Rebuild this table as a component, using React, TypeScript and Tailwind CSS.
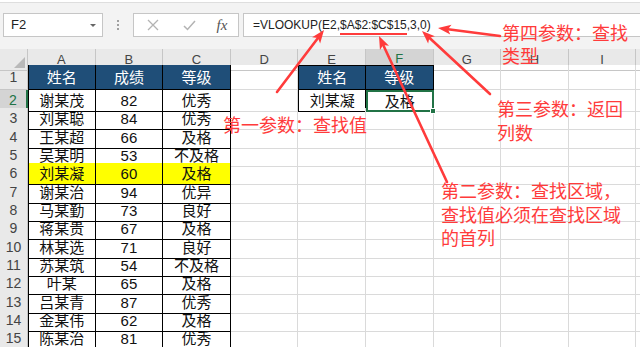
import React from 'react';

const COLS = ['A', 'B', 'C', 'D', 'E', 'F', 'G', 'H', 'I', 'J'];

const rows: [string, string, string][] = [
  ['谢某茂', '82', '优秀'],
  ['刘某聪', '84', '优秀'],
  ['王某超', '66', '及格'],
  ['吴某明', '53', '不及格'],
  ['刘某凝', '60', '及格'],
  ['谢某治', '94', '优异'],
  ['马某勤', '73', '良好'],
  ['蒋某贵', '67', '及格'],
  ['林某选', '71', '良好'],
  ['苏某筑', '54', '不及格'],
  ['叶某', '65', '及格'],
  ['吕某青', '87', '优秀'],
  ['金某伟', '62', '及格'],
  ['陈某治', '81', '优秀'],
];

const font = "font-['Liberation_Sans','Noto_Sans_CJK_SC',sans-serif]";
const cjk = "font-['Noto_Sans_CJK_SC',sans-serif]";

function Arrow({ x1, y1, x2, y2 }: { x1: number; y1: number; x2: number; y2: number }) {
  const dx = x2 - x1;
  const dy = y2 - y1;
  const len = Math.hypot(dx, dy);
  const ux = dx / len;
  const uy = dy / len;
  const hl = 13;
  const hw = 5;
  const bx = x2 - ux * hl;
  const by = y2 - uy * hl;
  const pts = `${x2},${y2} ${bx - uy * hw},${by + ux * hw} ${bx + ux * 3},${by + uy * 3} ${bx + uy * hw},${by - ux * hw}`;
  return (
    <g>
      <line x1={x1} y1={y1} x2={bx + ux * 3} y2={by + uy * 3} stroke="#ff3b3b" strokeWidth={2.6} strokeLinecap="round" />
      <polygon points={pts} fill="#ff3b3b" />
    </g>
  );
}

function Toolbar() {
  return (
    <div className="h-[47px] bg-[#f3f3f3] border-t border-[#dedede] mt-[2px] flex items-start pt-[10px] pl-[3px]">
      <div className="w-[100px] h-[24px] bg-white border border-[#c6c6c6] flex items-center justify-between pl-[7px] pr-[6px]">
        <span className={`${font} text-[13px] text-[#222]`}>F2</span>
        <span className="w-0 h-0 border-x-[3px] border-x-transparent border-t-[3px] border-t-[#666]" />
      </div>
      <div className="w-[30px] h-[24px] flex flex-col items-center justify-center gap-[2px]">
        <span className="w-[2px] h-[2px] bg-[#a0a0a0]" />
        <span className="w-[2px] h-[2px] bg-[#a0a0a0]" />
        <span className="w-[2px] h-[2px] bg-[#a0a0a0]" />
      </div>
      <div className="w-[106px] h-[24px] bg-white border border-[#c6c6c6] flex items-center">
        <div className="w-[38px] flex justify-center">
          <svg width="12" height="12" viewBox="0 0 12 12">
            <path d="M1 1L11 11M11 1L1 11" stroke="#b3b3b3" strokeWidth="1.3" />
          </svg>
        </div>
        <div className="w-[34px] flex justify-center">
          <svg width="13" height="11" viewBox="0 0 13 11">
            <path d="M1 6L4.5 9.5L12 1" stroke="#b3b3b3" strokeWidth="1.5" fill="none" />
          </svg>
        </div>
        <div className="w-[32px] flex justify-center">
          <span className="font-['Liberation_Serif',serif] italic text-[15px] text-[#555]">fx</span>
        </div>
      </div>
      <div className="ml-[4px] flex-1 h-[24px] bg-white border border-[#c6c6c6] border-r-0 flex items-center pl-[9px]">
        <span className={`${font} text-[12px] text-[#222]`}>
          =VLOOKUP(E2,
          <span className="relative">
            $A$2:$C$15
            <span className="absolute left-0 right-0 bottom-[-3px] h-[2px] bg-[#ff3b3b]" />
          </span>
          ,3,0)
        </span>
      </div>
    </div>
  );
}

function Blank() {
  return <div className="border-r border-b border-[#dadada]" />;
}

function Sheet() {
  const gridCols = 'grid grid-cols-[28px_repeat(10,67.6px)]';
  const head = 'bg-[#e9e9e9] border-r border-b border-[#c6c6c6] text-[#444]';
  const table = 'border-r border-b border-black';
  return (
    <div className="flex flex-col">
      <div className={`${gridCols} h-[16px] bg-[#e9e9e9]`}>
        <div className="relative border-r border-b border-[#c6c6c6]">
          <span className="absolute right-[2px] bottom-[2px] w-0 h-0 border-l-[11px] border-l-transparent border-b-[11px] border-b-[#b9b9b9]" />
        </div>
        {COLS.map((c) =>
          c === 'F' ? (
            <div key={c} className={`${font} bg-[#d4d4d4] border-r border-[#c6c6c6] border-b-2 border-b-[#217346] text-[13px] text-[#217346] flex items-center justify-center`}>
              {c}
            </div>
          ) : (
            <div key={c} className={`${font} border-r border-b border-[#c6c6c6] text-[13px] text-[#444] flex items-center justify-center`}>
              {c}
            </div>
          ),
        )}
      </div>

      <div className={`${gridCols} h-[25px]`}>
        <div className={`${font} ${head} text-[14px] flex items-end justify-center pb-[1px]`}>1</div>
        {['姓名', '成绩', '等级'].map((t, i) => (
          <div key={t} className={`${cjk} ${table} ${i === 0 ? 'border-l' : ''} bg-[#1f4e78] text-white text-[15px] flex items-center justify-center`}>
            {t}
          </div>
        ))}
        <Blank />
        <div className={`${cjk} border border-black bg-[#1f4e78] text-white text-[15px] flex items-center justify-center`}>姓名</div>
        <div className={`${cjk} border-y border-r border-black bg-[#1f4e78] text-white text-[15px] flex items-center justify-center`}>等级</div>
        <Blank />
        <Blank />
        <Blank />
        <Blank />
      </div>

      {rows.map((r, idx) => {
        const n = idx + 2;
        return (
          <div key={n} className={`${gridCols} h-[18.33px]`}>
            {n === 2 ? (
              <div className={`${font} bg-[#d4d4d4] border-b border-[#c6c6c6] border-r-2 border-r-[#217346] text-[14px] text-[#217346] flex items-center justify-center`}>{n}</div>
            ) : (
              <div className={`${font} ${head} text-[14px] flex items-center justify-center`}>{n}</div>
            )}
            {r.map((t, i) => (
              <div key={i} className={`${font} ${table} ${i === 0 ? 'border-l' : ''} ${n === 6 ? 'bg-[#ffff00]' : ''} text-[15px] text-[#111] leading-none flex items-center justify-center`}>
                {t}
              </div>
            ))}
            <Blank />
            {n === 2 ? (
              <>
                <div className={`${font} border-x border-b border-black text-[15px] text-[#111] leading-none flex items-center justify-center`}>刘某凝</div>
                <div className={`${font} relative border-2 border-[#217346] text-[15px] text-[#111] leading-none flex items-center justify-center`}>
                  及格
                  <span className="absolute right-[-4px] bottom-[-4px] w-[6px] h-[6px] bg-[#217346] border border-white" />
                </div>
              </>
            ) : (
              <>
                <Blank />
                <Blank />
              </>
            )}
            <Blank />
            <Blank />
            <Blank />
            <Blank />
          </div>
        );
      })}

      <div className={`${gridCols} h-[18.33px]`}>
        <div className={`${font} bg-[#e9e9e9] border-r border-[#c6c6c6] text-[14px] text-[#444] flex items-center justify-center`}>16</div>
        {COLS.map((c) => (
          <div key={c} className="border-r border-[#dadada]" />
        ))}
      </div>
    </div>
  );
}

export default function App() {
  return (
    <div className="relative w-[640px] h-[347px] overflow-hidden bg-white">
      <Toolbar />
      <Sheet />

      <svg className="absolute left-0 top-0 pointer-events-none" width="640" height="347">
        <Arrow x1={277} y1={92} x2={324} y2={30} />
        <Arrow x1={447} y1={182} x2={379} y2={36} />
        <Arrow x1={490} y1={94} x2={422} y2={31} />
        <Arrow x1={500} y1={36} x2={438} y2={28} />
      </svg>

      <div className={`${cjk} absolute left-[502px] top-[21px] text-[18px] leading-[23px] text-[#ff3b3b]`}>
        第四参数：查找<br />类型
      </div>
      <div className={`${cjk} absolute left-[497px] top-[96px] text-[18px] leading-[24px] text-[#ff3b3b]`}>
        第三参数：返回<br />列数
      </div>
      <div className={`${cjk} absolute left-[223px] top-[113px] text-[18px] leading-[23px] text-[#ff3b3b]`}>
        第一参数：查找值
      </div>
      <div className={`${cjk} absolute left-[441px] top-[179px] text-[18px] leading-[23.5px] text-[#ff3b3b]`}>
        第二参数：查找区域，<br />查找值必须在查找区域<br />的首列
      </div>
    </div>
  );
}
